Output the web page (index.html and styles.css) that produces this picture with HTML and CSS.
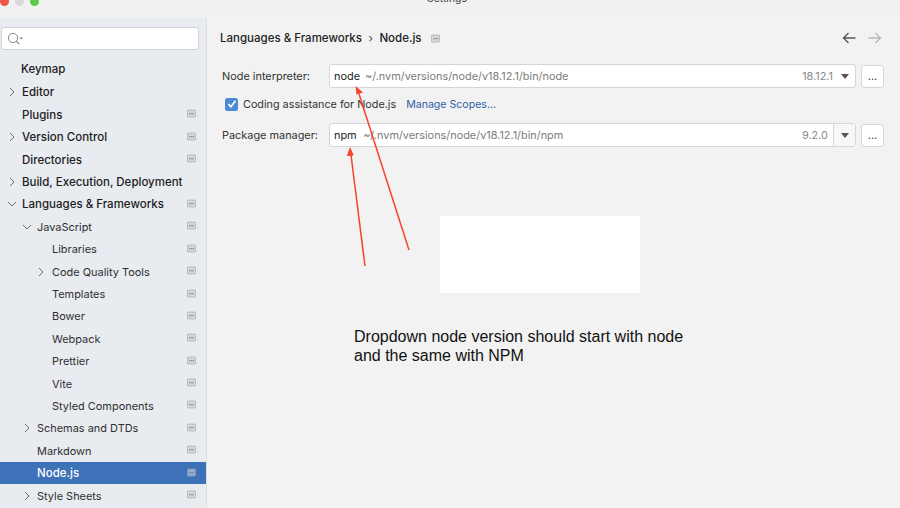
FILE: index.html
```html
<!DOCTYPE html>
<html lang="en">
<head>
<meta charset="utf-8">
<title>Settings</title>
<link rel="stylesheet" href="styles.css">
</head>
<body>
<svg width="0" height="0" class="defs">
  <symbol id="proj" viewBox="0 0 9 9"><rect x="0.5" y="1" width="8" height="7" rx="0.5" fill="#d3d6db" stroke="#afb3b9" stroke-width="0.8"/><rect x="2" y="4" width="5" height="1.2" fill="#9a9ea4"/></symbol>
  <symbol id="chev" viewBox="0 0 6 10"><path d="M1 1l4 4-4 4" fill="none" stroke="#6e6e6e" stroke-width="1"/></symbol>
  <symbol id="chevd" viewBox="0 0 10 6"><path d="M1 1l4 4 4-4" fill="none" stroke="#6e6e6e" stroke-width="1"/></symbol>
</svg>
<div class="window">
  <header class="titlebar">
    <div class="lights"><i class="light red"></i><i class="light gray"></i><i class="light green"></i></div>
    <span class="title">Settings</span>
  </header>
  <div class="main">
    <aside class="sidebar">
      <div class="search">
        <svg class="search-ico" width="20" height="14" viewBox="0 0 20 14"><circle cx="7" cy="6" r="4.6" fill="none" stroke="#8a8a8a" stroke-width="1"/><path d="M10.200 9.200l3 3" stroke="#8a8a8a" stroke-width="1.2"/><path d="M13.500 5.500h3.500l-1.750 2z" fill="#777"/></svg>
      </div>
      <nav class="tree">
        <div class="row top keymap"><span class="label">Keymap</span></div>
        <div class="row top"><svg class="chev"><use href="#chev"/></svg><span class="label">Editor</span></div>
        <div class="row top"><span class="label">Plugins</span><svg class="pi"><use href="#proj"/></svg></div>
        <div class="row top"><svg class="chev"><use href="#chev"/></svg><span class="label">Version Control</span><svg class="pi"><use href="#proj"/></svg></div>
        <div class="row top"><span class="label">Directories</span><svg class="pi"><use href="#proj"/></svg></div>
        <div class="row top"><svg class="chev"><use href="#chev"/></svg><span class="label">Build, Execution, Deployment</span></div>
        <div class="row top"><svg class="chevd"><use href="#chevd"/></svg><span class="label">Languages &amp; Frameworks</span><svg class="pi"><use href="#proj"/></svg></div>
        <div class="row l1"><svg class="chevd"><use href="#chevd"/></svg><span class="label">JavaScript</span><svg class="pi"><use href="#proj"/></svg></div>
        <div class="row l2"><span class="label">Libraries</span><svg class="pi"><use href="#proj"/></svg></div>
        <div class="row l2"><svg class="chev"><use href="#chev"/></svg><span class="label">Code Quality Tools</span><svg class="pi"><use href="#proj"/></svg></div>
        <div class="row l2"><span class="label">Templates</span><svg class="pi"><use href="#proj"/></svg></div>
        <div class="row l2"><span class="label">Bower</span><svg class="pi"><use href="#proj"/></svg></div>
        <div class="row l2"><span class="label">Webpack</span><svg class="pi"><use href="#proj"/></svg></div>
        <div class="row l2"><span class="label">Prettier</span><svg class="pi"><use href="#proj"/></svg></div>
        <div class="row l2"><span class="label">Vite</span><svg class="pi"><use href="#proj"/></svg></div>
        <div class="row l2"><span class="label">Styled Components</span><svg class="pi"><use href="#proj"/></svg></div>
        <div class="row l1"><svg class="chev"><use href="#chev"/></svg><span class="label">Schemas and DTDs</span><svg class="pi"><use href="#proj"/></svg></div>
        <div class="row l1"><span class="label">Markdown</span><svg class="pi"><use href="#proj"/></svg></div>
        <div class="row l1 selected"><span class="label">Node.js</span><svg class="pi"><use href="#proj"/></svg></div>
        <div class="row l1"><svg class="chev"><use href="#chev"/></svg><span class="label">Style Sheets</span><svg class="pi"><use href="#proj"/></svg></div>
      </nav>
    </aside>
    <section class="content">
      <div class="crumbs">
        <span class="crumb">Languages &amp; Frameworks</span>
        <span class="sep">›</span>
        <span class="crumb">Node.js</span>
        <svg class="crumb-ico"><use href="#proj"/></svg>
        <span class="spacer"></span>
        <svg class="nav-arrow" width="14" height="12" viewBox="0 0 14 12"><path d="M13.500 6H1.500M6.500 1l-5 5 5 5" fill="none" stroke="#555" stroke-width="1.3"/></svg>
        <svg class="nav-arrow" width="14" height="12" viewBox="0 0 14 12"><path d="M.5 6h12M7.500 1l5 5-5 5" fill="none" stroke="#b9b9b9" stroke-width="1.3"/></svg>
      </div>
      <div class="field">
        <label class="field-label">Node interpreter:</label>
        <div class="combo">
          <span class="val">node</span><span class="path">~/.nvm/versions/node/v18.12.1/bin/node</span>
          <span class="ver">18.12.1</span>
          <span class="drop"><i class="tri"></i></span>
        </div>
        <button class="more">...</button>
      </div>
      <div class="check-row">
        <span class="check"><svg width="10" height="10" viewBox="0 0 10 10"><path d="M1.500 5.200l2.400 2.600 4.600-6" fill="none" stroke="#fff" stroke-width="1.700"/></svg></span>
        <span class="check-label">Coding assistance for Node.js</span>
        <a class="link">Manage Scopes...</a>
      </div>
      <div class="field">
        <label class="field-label">Package manager:</label>
        <div class="combo">
          <span class="val npm">npm</span><span class="path">~/.nvm/versions/node/v18.12.1/bin/npm</span>
          <span class="ver split-ver">9.2.0</span>
          <span class="drop split"><i class="tri"></i></span>
        </div>
        <button class="more">...</button>
      </div>
    </section>
  </div>
</div>
<div class="redact"></div>
<svg class="arrows" width="900" height="508" viewBox="0 0 900 508">
  <path d="M409 250L359 94" stroke="#f4432b" stroke-width="1.500"/>
  <path d="M355.500 86l7.500 6.500-6.500 2z" fill="#f4432b"/>
  <path d="M365 266L351 155" stroke="#f4432b" stroke-width="1.500"/>
  <path d="M350 147l3.800 8.500-7 .6z" fill="#f4432b"/>
</svg>
<p class="note">Dropdown node version should start with node<br>and the same with NPM</p>
</body>
</html>
```
FILE: styles.css
```css
* { box-sizing: border-box; }
html, body { margin: 0; padding: 0; width: 900px; height: 508px; overflow: hidden; }
body { position: relative; background: #f2f2f2; font-family: Inter, "Liberation Sans", sans-serif; font-size: 10.9px; color: #1f1f1f; }
.defs { position: absolute; }
.window { display: flex; flex-direction: column; height: 508px; }
.titlebar { height: 18px; flex: none; position: relative; background: #f1f1f1; display: flex; justify-content: center; overflow: hidden; }
.title { font-size: 10.5px; line-height: 12px; margin-top: -7px; margin-left: -6px; color: #444; }
.lights { position: absolute; left: 0; top: -3.5px; display: flex; gap: 6px; }
.light { width: 9px; height: 9px; border-radius: 50%; display: block; }
.red { background: #f2544c; }
.gray { background: #d9d9d9; }
.green { background: #5cc84c; }
.main { flex: 1; display: flex; min-height: 0; }
.sidebar { width: 207px; flex: none; background: #e8ebf0; border-right: 1px solid #dcdee2; padding-top: 9px; overflow: hidden; }
.search { height: 23px; margin: 0 7px 0 1px; background: #fff; border: 1px solid #cfd1d4; border-radius: 3px; display: flex; align-items: center; padding-left: 4px; }
.tree { margin-top: 6.3px; }
.row { height: 22.4px; display: flex; align-items: center; position: relative; font-size: 10.95px; color: #303030; padding-right: 10px; }
.row.top { padding-left: 22px; font-size: 11.5px; font-weight: 500; color: #1c1c1c; }
.row.keymap { padding-left: 21px; height: 25px; }
.row.l1 { padding-left: 37px; }
.row.l2 { padding-left: 52px; }
.label { flex: 1; white-space: nowrap; }
.chev { position: absolute; width: 6px; height: 10px; }
.chevd { position: absolute; width: 10px; height: 6px; }
.top .chev { left: 9px; }
.top .chevd { left: 7px; }
.l1 .chev { left: 24px; }
.l1 .chevd { left: 22px; }
.l2 .chev { left: 38px; }
.pi { width: 9px; height: 9px; flex: none; margin-bottom: 2px; }
.row.selected { background: #3d71b8; color: #fff; font-size: 11.5px; font-weight: 500; }
.selected .pi { opacity: 0.6; }
.content { flex: 1; padding: 13px 16px 0 13px; min-width: 0; }
.crumbs { display: flex; align-items: center; height: 14px; font-weight: 500; font-size: 11.5px; color: #222; margin: 0 2px 19px 0; }
.sep { margin: 0 6.5px; color: #444; font-weight: 400; }
.crumb-ico { width: 9px; height: 9px; margin-left: 9px; }
.spacer { flex: 1; }
.nav-arrow { margin-left: 12px; flex: none; }
.field { display: flex; align-items: center; height: 24px; margin-left: 2px; }
.field-label { width: 107px; flex: none; color: #333; }
.combo { flex: 1; height: 24px; display: flex; align-items: center; background: #fff; border: 1px solid #d6d6d6; border-radius: 3px; padding-left: 4px; min-width: 0; }
.val { color: #222; margin-right: 5px; }
.val.npm { margin-right: 6.5px; }
.path { flex: 1; color: #7c7c7c; white-space: nowrap; }
.ver { color: #8a8a8a; margin-right: 1px; }
.split-ver { margin-right: 5px; }
.drop { width: 21px; height: 100%; display: flex; align-items: center; justify-content: center; flex: none; }
.drop.split { border-left: 1px solid #d6d6d6; background: #f7f7f7; width: 22px; }
.tri { width: 0; height: 0; border-left: 4px solid transparent; border-right: 4px solid transparent; border-top: 5px solid #555; display: block; }
.more { width: 23px; height: 23px; flex: none; margin-left: 5px; background: #fff; border: 1px solid #d6d6d6; border-radius: 3px; padding: 0; font: 11px Inter, sans-serif; color: #444; }
.check-row { display: flex; align-items: center; height: 22px; margin: 5px 0 8px 5px; font-size: 10.8px; }
.check { width: 13px; height: 13px; background: #4f8ad6; border-radius: 2.5px; display: flex; align-items: center; justify-content: center; margin-right: 5px; }
.check-label { color: #333; }
.link { color: #2f5fa8; margin-left: 10px; font-size: 10.6px; }
.redact { position: absolute; left: 440px; top: 216px; width: 200px; height: 77px; background: #fff; }
.arrows { position: absolute; left: 0; top: 0; pointer-events: none; }
.note { position: absolute; left: 354px; top: 328px; margin: 0; font-family: "Liberation Sans", Arial, sans-serif; font-size: 16px; line-height: 18.5px; color: #111; }
```
